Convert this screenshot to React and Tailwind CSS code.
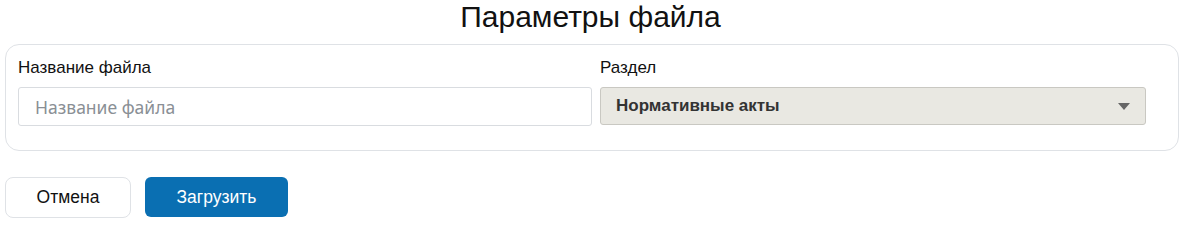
export default function App() {
  return (
    <main className="w-[1181px] h-[222px] bg-white font-['Liberation_Sans',Arial,sans-serif] text-[#111]">
      {/* Header */}
      <h1 className="h-[40px] text-center text-[30px] leading-[34px] text-[#111]">Параметры файла</h1>

      {/* Card */}
      <section className="ml-[5px] mt-[4px] w-[1174px] h-[107px] rounded-[14px] border border-[#dfe2e6] px-[12px] pt-[12px]">
        <div className="flex gap-[8px]">
          <div className="w-[574px]">
            <label className="block text-[17px] leading-[21px] text-[#111]">Название файла</label>
            <input
              type="text"
              placeholder="Название файла"
              className="mt-[9px] w-full h-[39px] rounded-[3px] border border-[#d9dce0] px-[16px] text-[17.5px] font-['Noto_Sans',sans-serif] placeholder:text-[#8a8f95] outline-none"
            />
          </div>
          <div className="w-[546px]">
            <label className="block text-[17px] leading-[21px] text-[#111]">Раздел</label>
            <div className="mt-[9px] h-[38px] rounded-[3px] border border-[#c9c8c2] bg-[#e9e8e2] flex items-center justify-between pl-[15px] pr-[15px]">
              <span className="text-[17px] font-bold text-[#333]">Нормативные акты</span>
              <svg width="12" height="7" viewBox="0 0 12 7" className="mt-[1px]">
                <path d="M0 0 H12 L6 7 Z" fill="#666" />
              </svg>
            </div>
          </div>
        </div>
      </section>

      {/* Actions */}
      <div className="flex gap-[14px] ml-[5px] mt-[26px]">
        <button className="w-[126px] h-[41px] rounded-[8px] border border-[#dfe2e6] bg-white text-[17.5px] text-[#111]">
          Отмена
        </button>
        <button className="w-[143px] h-[40px] rounded-[6px] bg-[#0a6fb2] text-[17.5px] text-white">
          Загрузить
        </button>
      </div>
    </main>
  )
}
